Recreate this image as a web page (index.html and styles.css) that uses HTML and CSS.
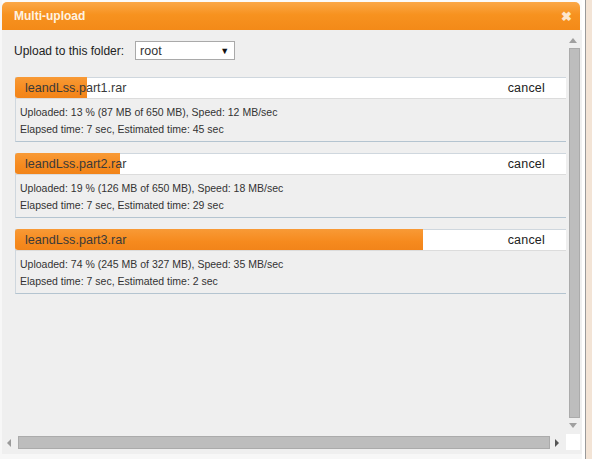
FILE: index.html
```html
<!DOCTYPE html>
<html>
<head>
<meta charset="utf-8">
<link rel="stylesheet" href="styles.css">
</head>
<body>
<div class="screen">
  <div class="dialog">
    <div class="titlebar">
      <span class="title">Multi-upload</span>
      <span class="close">&#10006;</span>
    </div>
    <div class="body">
      <div class="viewport">
        <div class="folder-row">
          <span class="folder-label">Upload to this folder:</span>
          <div class="select"><span>root</span><span class="caret">&#9660;</span></div>
        </div>

        <div class="item">
          <div class="item-head">
            <div class="progress" style="width:13%"></div>
            <span class="fname">leandLss.part1.rar</span>
            <span class="cancel">cancel</span>
          </div>
          <div class="item-info">
            <div>Uploaded: 13 % (87 MB of 650 MB), Speed: 12 MB/sec</div>
            <div>Elapsed time: 7 sec, Estimated time: 45 sec</div>
          </div>
        </div>

        <div class="item">
          <div class="item-head">
            <div class="progress" style="width:19%"></div>
            <span class="fname">leandLss.part2.rar</span>
            <span class="cancel">cancel</span>
          </div>
          <div class="item-info">
            <div>Uploaded: 19 % (126 MB of 650 MB), Speed: 18 MB/sec</div>
            <div>Elapsed time: 7 sec, Estimated time: 29 sec</div>
          </div>
        </div>

        <div class="item">
          <div class="item-head">
            <div class="progress" style="width:74%"></div>
            <span class="fname">leandLss.part3.rar</span>
            <span class="cancel">cancel</span>
          </div>
          <div class="item-info">
            <div>Uploaded: 74 % (245 MB of 327 MB), Speed: 35 MB/sec</div>
            <div>Elapsed time: 7 sec, Estimated time: 2 sec</div>
          </div>
        </div>
      </div>

      <div class="vscroll">
        <div class="arrow-up"></div>
        <div class="vthumb"></div>
        <div class="arrow-down"></div>
      </div>
      <div class="hscroll">
        <div class="arrow-left"></div>
        <div class="hthumb"></div>
        <div class="arrow-right"></div>
      </div>
      <div class="corner"></div>
    </div>
  </div>
  <div class="side"></div>
</div>
</body>
</html>
```

FILE: styles.css
```css
html, body {
  margin: 0;
  padding: 0;
  background: #f7f7f7;
}
body {
  font-family: "Liberation Sans", Arial, sans-serif;
  color: #333;
  width: 592px;
  height: 459px;
  overflow: hidden;
}
.screen {
  display: flex;
  height: 459px;
}
.dialog {
  margin-left: 2px;
  width: 580px;
  height: 452px;
  padding-top: 2px;
  background: #fbfbfb;
  display: flex;
  flex-direction: column;
}
.titlebar {
  height: 28px;
  margin-right: 2px;
  border-radius: 5px 5px 0 0;
  background: linear-gradient(#fba848 0%, #f7921f 45%, #f38a18 100%);
  display: flex;
  align-items: center;
  justify-content: space-between;
  padding: 0 8px 0 12px;
}
.title {
  color: #fff3e2;
  font-weight: bold;
  font-size: 12px;
}
.close {
  color: #fde6cc;
  font-size: 13px;
  font-weight: bold;
}
.body {
  flex: 1;
  background: #efefef;
  display: grid;
  grid-template-columns: 564px 14px 2px;
  grid-template-rows: 404px 16px;
}
.viewport {
  grid-column: 1;
  grid-row: 1;
  overflow: hidden;
  padding: 11px 0 0 12px;
}
.folder-row {
  display: flex;
  align-items: center;
  height: 19px;
  font-size: 12px;
}
.folder-label {
  margin-right: 11px;
  color: #222;
}
.select {
  width: 100px;
  height: 19px;
  box-sizing: border-box;
  border: 1px solid #a9a9a9;
  background: #fff;
  display: flex;
  align-items: center;
  justify-content: space-between;
  padding: 0 5px 0 4px;
  color: #333;
  font-size: 12.5px;
}
.caret {
  font-size: 9px;
  color: #111;
}
.item {
  margin: 11px 0 0 1px;
  width: 551px;
  border: 1px solid #cfd7de;
  border-bottom-color: #b4c4d0;
  background: #efefef;
}
.folder-row + .item {
  margin-top: 17px;
}
.item-head {
  position: relative;
  height: 20px;
  background: #fff;
  border-bottom: 1px solid #dcdcdc;
  display: flex;
  align-items: center;
  justify-content: space-between;
  padding: 0 22px 0 9px;
  font-size: 12.6px;
}
.progress {
  position: absolute;
  left: -1px;
  top: -1px;
  height: 21px;
  border-radius: 3px 0 0 3px;
  background: linear-gradient(#f89a36 0%, #f68a1e 60%, #f2841a 100%);
}
.fname, .cancel {
  position: relative;
}
.fname {
  color: #3a3a3a;
}
.cancel {
  color: #222;
  font-size: 12.5px;
  letter-spacing: 0.2px;
}
.item-info {
  padding: 5px 0 3px 4px;
  font-size: 10.5px;
  line-height: 17px;
  color: #333;
}
.vscroll {
  grid-column: 2;
  grid-row: 1;
  display: flex;
  flex-direction: column;
  align-items: center;
  padding: 8px 0 2px 0;
}
.arrow-up, .arrow-down {
  width: 0;
  height: 0;
  border-left: 4px solid transparent;
  border-right: 4px solid transparent;
}
.arrow-up {
  border-bottom: 5px solid #a0a0a0;
  margin-bottom: 5px;
}
.arrow-down {
  border-top: 5px solid #a0a0a0;
  margin-top: 5px;
}
.vthumb {
  width: 11px;
  height: 370px;
  box-sizing: border-box;
  background: #bdbdbd;
  border: 1px solid #ababab;
  margin-left: 2px;
}
.hscroll {
  grid-column: 1;
  grid-row: 2;
  display: flex;
  align-items: center;
  padding: 2px 0 1px 5px;
}
.arrow-left, .arrow-right {
  width: 0;
  height: 0;
  border-top: 4px solid transparent;
  border-bottom: 4px solid transparent;
}
.arrow-left {
  border-right: 4px solid #9a9a9a;
  margin-right: 7px;
}
.arrow-right {
  border-left: 4px solid #555;
  margin-left: 5px;
}
.hthumb {
  width: 532px;
  height: 13px;
  box-sizing: border-box;
  background: #bdbdbd;
  border: 1px solid #ababab;
}
.corner {
  grid-column: 2;
  grid-row: 2;
  background: #fff;
}
.side {
  width: 10px;
  background: linear-gradient(90deg, #ffffff 0 3px, #9a9a9a 3px 4px, #f3e4d6 4px 100%);
}
```
